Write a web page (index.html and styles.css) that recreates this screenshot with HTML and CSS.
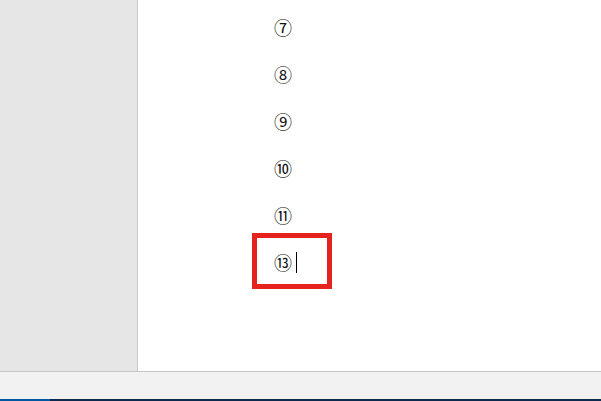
FILE: index.html
```html
<!DOCTYPE html>
<html>
<head>
<meta charset="utf-8">
<link rel="stylesheet" href="styles.css">
</head>
<body>
<div class="window">
  <div class="main">
    <aside class="sidebar"></aside>
    <section class="doc">
      <div class="line">⑦</div>
      <div class="line">⑧</div>
      <div class="line">⑨</div>
      <div class="line">⑩</div>
      <div class="line">⑪</div>
      <div class="line current"><span class="text">⑬</span><span class="caret"></span><span class="highlight"></span></div>
    </section>
  </div>
  <footer class="statusbar"></footer>
  <div class="taskbar"><div class="taskbar-start"></div></div>
</div>
</body>
</html>
```

FILE: styles.css
```css
html, body {
  margin: 0;
  padding: 0;
  background: #ffffff;
}
.window {
  width: 601px;
  height: 401px;
  display: flex;
  flex-direction: column;
  overflow: hidden;
}
.main {
  height: 371px;
  display: flex;
}
.sidebar {
  width: 137px;
  background: #e6e6e6;
  border-right: 1px solid #c8c8c8;
}
.doc {
  flex: 1;
  background: #ffffff;
  padding-top: 4px;
  padding-left: 136px;
  font-family: "Noto Sans CJK JP", sans-serif;
  font-size: 18px;
  color: #111111;
}
.line {
  height: 47px;
  line-height: 47px;
}
.current {
  position: relative;
  display: flex;
  align-items: center;
}
.caret {
  display: inline-block;
  width: 1px;
  height: 21px;
  background: #000000;
  margin-left: 4px;
}
.highlight {
  position: absolute;
  left: -22px;
  top: -6px;
  width: 70px;
  height: 46px;
  border: 5px solid #e5221d;
}
.statusbar {
  height: 27px;
  background: #f2f2f2;
  border-top: 1px solid #c6c6c6;
}
.taskbar {
  height: 2px;
  background: #0d2a4c;
  display: flex;
}
.taskbar-start {
  width: 50px;
  background: #0058a3;
}
```
